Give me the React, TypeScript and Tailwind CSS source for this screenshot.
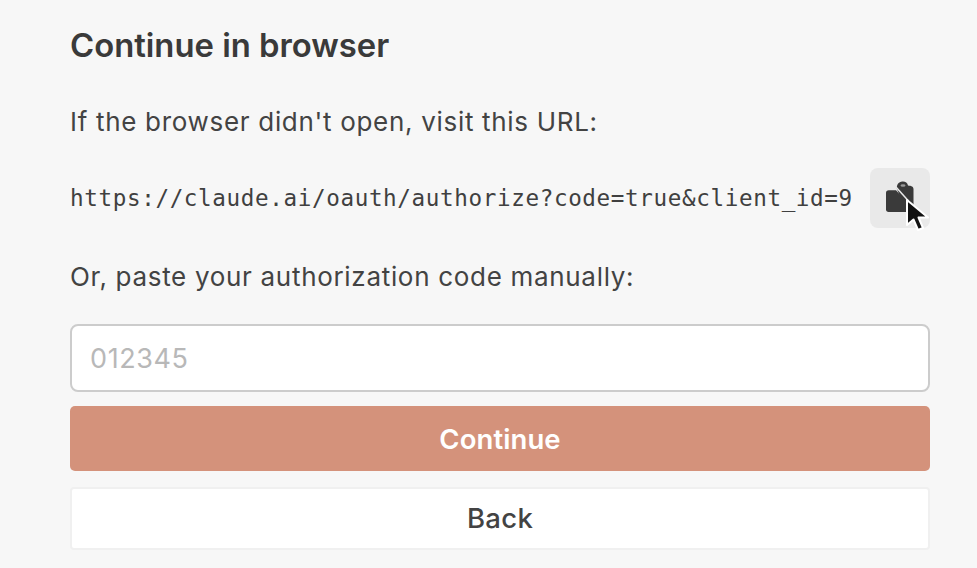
export default function App() {
  return (
    <div className="w-[977px] h-[568px] overflow-hidden bg-[#f7f7f7] text-[#434343] font-['Inter',sans-serif]">
      <div className="ml-[70px] w-[860px] flex flex-col">
        <h1 className="mt-[26px] h-[38px] leading-[38px] text-[32.8px] font-semibold text-[#3a3a3a]">Continue in browser</h1>
        <p className="mt-[41px] h-[32px] leading-[34px] text-[26px] tracking-[0.69px] whitespace-nowrap">If the browser didn't open, visit this URL:</p>
        <div className="mt-[31px] h-[60px] flex items-center justify-between">
          <span className="pt-[2px] font-['DejaVu_Sans_Mono',monospace] text-[22.6px] tracking-[0.63px] text-[#404040] whitespace-nowrap">https://claude.ai/oauth/authorize?code=true&amp;client_id=9</span>
          <button className="relative w-[60px] h-[60px] rounded-[8px] bg-[#e9e9e9] flex items-center justify-center">
            <svg width="60" height="60" viewBox="0 0 60 60" className="block">
              <path d="M27 18c1-3.500 3.500-4.500 6-4.500s4.500 1.500 5 4c3 .3 5.500 1 5.500 3.500V38H34L26.500 20z" fill="#3a3a3a" />
              <path d="M16 25c0-1.800 1-2.800 2.700-2.800H26l10 11V44H18.500c-1.500 0-2.500-1-2.500-2.500z" fill="#3a3a3a" />
              <path d="M25.500 18.500l13 14.500" stroke="#e9e9e9" strokeWidth="1.500" fill="none" />
              <ellipse cx="33" cy="17.500" rx="2.500" ry="1.300" fill="#9a9a9a" />
            </svg>
            <svg width="34" height="40" viewBox="0 0 34 40" className="absolute left-[34px] top-[29px]">
              <path d="M3 3L3 28L9.500 22.500L14 33L19 31L14.500 20.500L24 20.500Z" fill="#111111" stroke="#ffffff" strokeWidth="2" strokeLinejoin="round" />
            </svg>
          </button>
        </div>
        <p className="mt-[32px] h-[32px] leading-[34px] text-[26px] tracking-[0.69px] whitespace-nowrap">Or, paste your authorization code manually:</p>
        <input
          readOnly
          placeholder="012345"
          className="mt-[32px] h-[68px] w-full rounded-[8px] border-2 border-[#cccccc] bg-white px-[18px] text-[27px] tracking-[0.6px] outline-none placeholder:text-[#b8b8b8]"
        />
        <button className="mt-[14px] h-[65px] pt-[2px] w-full rounded-[5px] bg-[#d4927b] text-white text-[27.5px] font-semibold tracking-[0.1px]">Continue</button>
        <button className="mt-[16px] h-[63px] pt-[1px] w-full rounded-[4px] border-2 border-[#f0f0f0] bg-white text-[27.5px] font-medium text-[#434343] tracking-[0.3px]">Back</button>
      </div>
    </div>
  );
}
